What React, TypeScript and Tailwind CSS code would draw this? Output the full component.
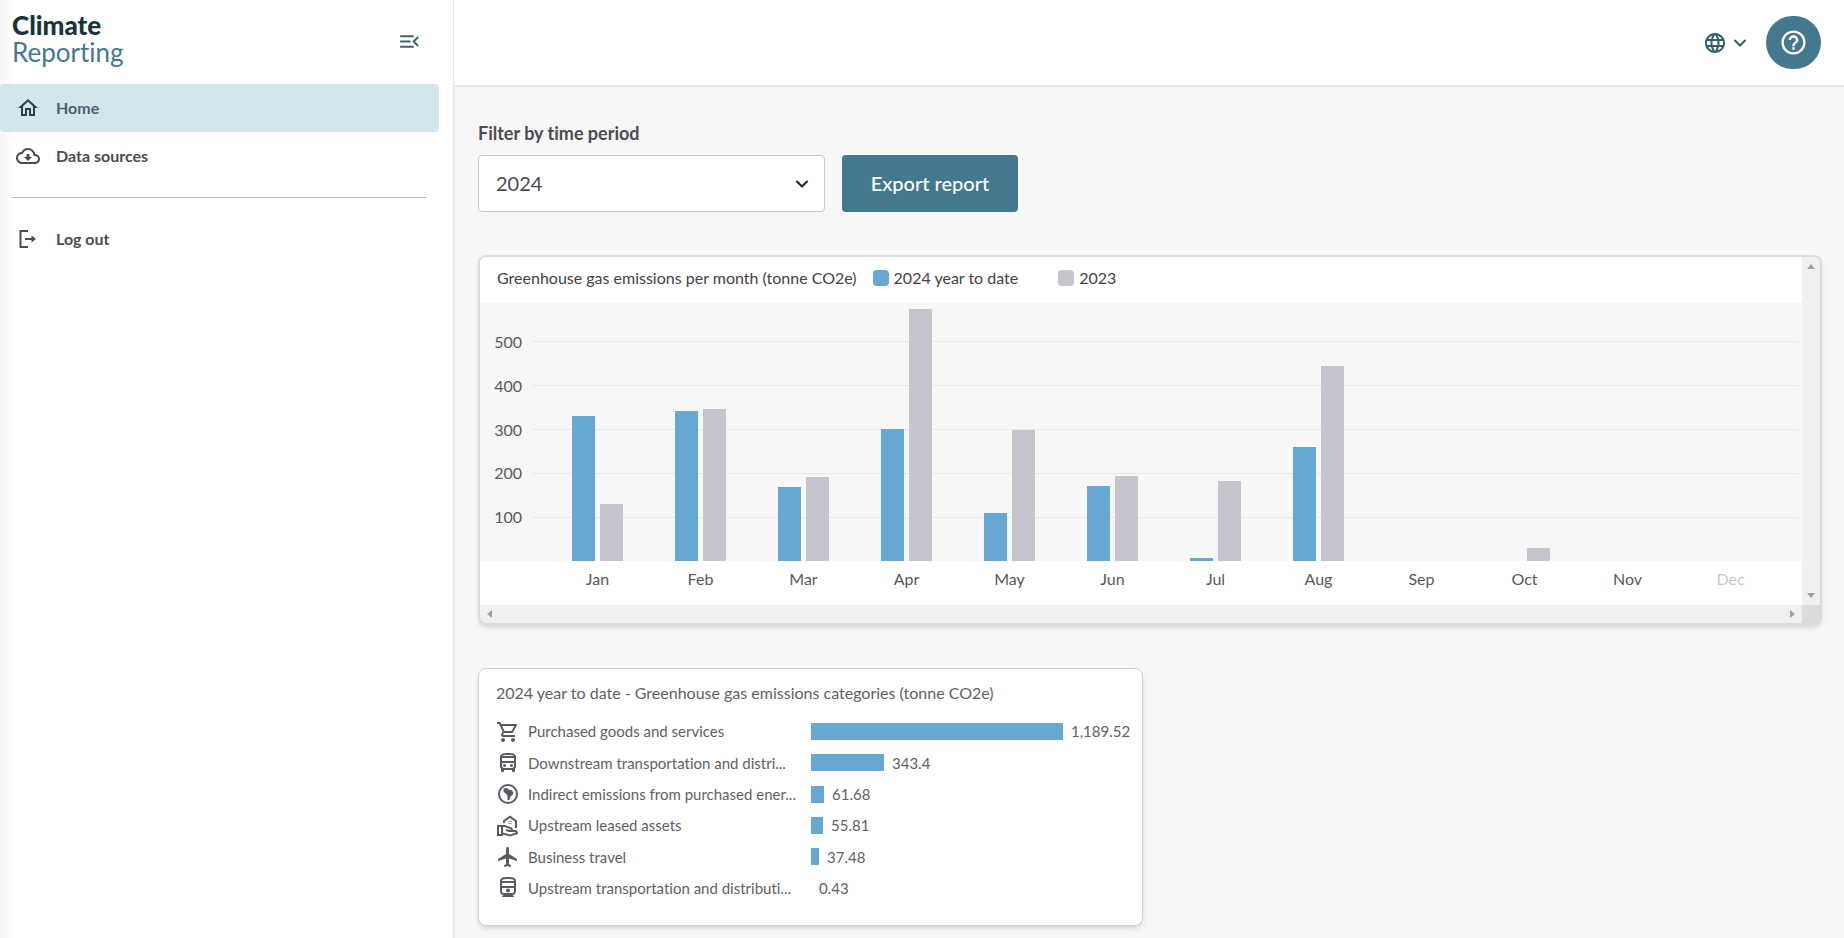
import React from "react";
import {
  MdFlight,
  MdHelpOutline,
  MdLanguage,
  MdMenuOpen,
  MdOutlineCloudDownload,
  MdOutlineDirectionsBusFilled,
  MdOutlineDirectionsRailway,
  MdOutlineHome,
  MdOutlineRealEstateAgent,
  MdOutlineShoppingCart,
} from "react-icons/md";
import { ChevronDown } from "lucide-react";
import { clsx } from "clsx";

const months = [
  { name: "Jan", current: 331, previous: 131 },
  { name: "Feb", current: 343, previous: 348 },
  { name: "Mar", current: 169, previous: 192 },
  { name: "Apr", current: 301, previous: 574 },
  { name: "May", current: 109, previous: 300 },
  { name: "Jun", current: 171, previous: 194 },
  { name: "Jul", current: 8, previous: 182 },
  { name: "Aug", current: 260, previous: 445 },
  { name: "Sep", current: 0, previous: 0 },
  { name: "Oct", current: 0, previous: 30 },
  { name: "Nov", current: 0, previous: 0 },
  { name: "Dec", current: 0, previous: 0, muted: true },
];

const AXIS_MAX = 591;
const ticks = [500, 400, 300, 200, 100];

const percent = (value: number) => `${(value / AXIS_MAX) * 100}%`;

function EarthIcon({ className }: { className?: string }) {
  return (
    <svg viewBox="0 0 24 24" className={className} fill="none" aria-hidden="true">
      <circle cx="12" cy="12" r="9" stroke="currentColor" strokeWidth="2" />
      <path
        d="M7.500 6.500 11 6l1.500 1.500 3 .5 2 2.500-1 2.500-2 1.500-1.500 4-1.500-.5v-4.500L9.500 11.500 7.500 9.500z"
        fill="currentColor"
      />
    </svg>
  );
}

function LogOutIcon({ className }: { className?: string }) {
  return (
    <svg viewBox="0 0 24 24" className={className} fill="none" stroke="currentColor" strokeWidth="2" aria-hidden="true">
      <path d="M12 4H4.500v16H12" />
      <path d="M9 12h8" />
      <path d="M15.500 8.500 20 12l-4.500 3.500z" fill="currentColor" stroke="none" />
    </svg>
  );
}

const categories = [
  { name: "Purchased goods and services", value: "1,189.52", width: 252, Icon: MdOutlineShoppingCart },
  { name: "Downstream transportation and distri...", value: "343.4", width: 73, Icon: MdOutlineDirectionsBusFilled },
  { name: "Indirect emissions from purchased ener...", value: "61.68", width: 13, Icon: EarthIcon },
  { name: "Upstream leased assets", value: "55.81", width: 12, Icon: MdOutlineRealEstateAgent },
  { name: "Business travel", value: "37.48", width: 8, Icon: MdFlight },
  { name: "Upstream transportation and distributi...", value: "0.43", width: 0, Icon: MdOutlineDirectionsRailway },
];

function Sidebar() {
  return (
    <aside className="w-[454px] shrink-0 bg-linear-to-r from-[#f5f5f5] to-white to-3% border-r border-gray-200 shadow-sm">
      <div className="h-[84px] pl-3 pr-[31px] flex items-start justify-between">
        <div className="pt-3 text-[26px] leading-[27px]">
          <div className="font-black text-[#17343b]">Climate</div>
          <div className="text-[#44788f]">Reporting</div>
        </div>
        <button type="button" aria-label="Collapse menu" className="mt-[29px] text-[#3f6672]">
          <MdMenuOpen className="size-[25px]" />
        </button>
      </div>
      <nav className="text-base font-bold text-[#4d4a50]">
        <a href="#home" className="mr-[14px] h-12 pl-4 flex items-center gap-4 rounded bg-[#d4e6ed] text-[#4a626e]">
          <MdOutlineHome className="size-6 text-[#2e4048]" />
          Home
        </a>
        <a href="#sources" className="h-12 pl-4 flex items-center gap-4">
          <MdOutlineCloudDownload className="size-6" />
          Data sources
        </a>
        <hr className="my-[17px] ml-3 mr-[26px] border-[#b9c4c2]" />
        <a href="#logout" className="h-12 pl-4 flex items-center gap-4">
          <LogOutIcon className="size-6" />
          Log out
        </a>
      </nav>
    </aside>
  );
}

function Legend({ color, label }: { color: string; label: string }) {
  return (
    <span className="flex items-center gap-[5px]">
      <span className={clsx("size-4 rounded", color)} />
      {label}
    </span>
  );
}

function MonthlyChart() {
  return (
    <section className="rounded-lg border-2 border-[#dcdcde] bg-[#f0f0f0] shadow-md overflow-hidden grid grid-cols-[1fr_18px] grid-rows-[auto_18px]">
      <div className="bg-white text-base text-[#5a575d]">
        <div className="h-[45px] pl-[17px] pb-1 flex items-center text-[#454247]">
          <h2 className="mr-4">Greenhouse gas emissions per month (tonne CO2e)</h2>
          <Legend color="bg-[#67a8d2]" label="2024 year to date" />
          <div className="ml-10">
            <Legend color="bg-[#c5c5cd]" label="2023" />
          </div>
        </div>
        <div className="relative h-[259px] bg-[#f7f7f8]">
          {ticks.map((tick) => (
            <div
              key={tick}
              className="absolute inset-x-0 h-6 translate-y-1/2 pl-[10px] pr-1 flex items-center gap-[10px]"
              style={{ bottom: percent(tick) }}
            >
              <span className="w-8 text-right">{tick}</span>
              <span className="flex-1 h-px bg-[#e8e8eb]" />
            </div>
          ))}
          <div className="relative h-full ml-[66px] mr-5 grid grid-cols-12">
            {months.map((month) => (
              <div key={month.name} className="flex items-end justify-center gap-[5px]">
                <div className="w-[23px] bg-[#67a8d2]" style={{ height: percent(month.current) }} />
                <div className="w-[23px] bg-[#c5c5cd]" style={{ height: percent(month.previous) }} />
              </div>
            ))}
          </div>
        </div>
        <div className="h-11 pt-1.5 ml-[66px] mr-5 grid grid-cols-12 text-center">
          {months.map((month) => (
            <span key={month.name} className={clsx(month.muted && "text-[#c8c8ca]")}>
              {month.name}
            </span>
          ))}
        </div>
      </div>
      <div className="py-[7px] flex flex-col items-center justify-between text-[#a0a0a0]">
        <svg viewBox="0 0 8 5" className="w-2 h-[5px]" fill="currentColor"><path d="M0 5 4 0l4 5z" /></svg>
        <svg viewBox="0 0 8 5" className="w-2 h-[5px]" fill="currentColor"><path d="M0 0h8L4 5z" /></svg>
      </div>
      <div className="px-[7px] flex items-center justify-between text-[#a0a0a0]">
        <svg viewBox="0 0 5 8" className="w-[5px] h-2" fill="currentColor"><path d="M5 0v8L0 4z" /></svg>
        <svg viewBox="0 0 5 8" className="w-[5px] h-2" fill="currentColor"><path d="M0 0l5 4-5 4z" /></svg>
      </div>
      <div className="bg-[#dcdcdc]" />
    </section>
  );
}

function CategoryCard() {
  return (
    <section className="mt-[43px] w-[665px] pl-[17px] pr-2 pt-3 pb-[21px] rounded-lg border border-[#d0d0d2] bg-white shadow-md text-[#626065]">
      <h2 className="mb-[11px] text-base leading-6">2024 year to date - Greenhouse gas emissions categories (tonne CO2e)</h2>
      <ul className="h-[188px] grid grid-rows-6 text-[15px]">
        {categories.map(({ name, value, width, Icon }) => (
          <li key={name} className="flex items-center">
            <Icon className="size-6 shrink-0 mr-2 text-[#5c5a60]" />
            <span className="w-[279px] shrink-0 mr-1 whitespace-nowrap">{name}</span>
            <span className="h-[17px] shrink-0 bg-[#67a8d2]" style={{ width }} />
            <span className="ml-2">{value}</span>
          </li>
        ))}
      </ul>
    </section>
  );
}

export default function App() {
  return (
    <div className="min-h-screen flex bg-[#f7f7f8] font-['Lato','Noto_Sans',sans-serif] [font-variant-ligatures:none] text-[#4d4a50]">
      <Sidebar />
      <div className="flex-1 min-w-0">
        <header className="h-[87px] pr-[23px] flex items-center justify-end gap-4 bg-white border-b-2 border-[#e6e6e8]">
          <button type="button" aria-label="Language" className="flex items-center gap-[3px] text-[#33606c]">
            <MdLanguage className="size-6" />
            <ChevronDown className="size-5" strokeWidth={2.5} />
          </button>
          <button
            type="button"
            aria-label="Help"
            className="w-[55px] h-[53px] rounded-full bg-[#44788f] text-white flex items-center justify-center"
          >
            <MdHelpOutline className="size-[29px]" />
          </button>
        </header>
        <main className="pl-6 pr-[22px] pt-[34px]">
          <label htmlFor="period" className="block mb-[10px] text-lg leading-6 font-bold">
            Filter by time period
          </label>
          <div className="mb-[43px] flex gap-[17px]">
            <div className="relative">
              <select
                id="period"
                defaultValue="2024"
                className="w-[347px] h-[57px] pl-[17px] pb-0.5 appearance-none rounded border border-[#c9c9cb] bg-white text-xl"
              >
                <option>2024</option>
                <option>2023</option>
              </select>
              <ChevronDown className="absolute right-[13px] top-[19px] size-5 pointer-events-none text-[#252528]" strokeWidth={2.5} />
            </div>
            <button type="button" className="w-44 h-[57px] pb-0.5 rounded bg-[#44788f] text-white text-xl font-medium">
              Export report
            </button>
          </div>
          <MonthlyChart />
          <CategoryCard />
        </main>
      </div>
    </div>
  );
}
